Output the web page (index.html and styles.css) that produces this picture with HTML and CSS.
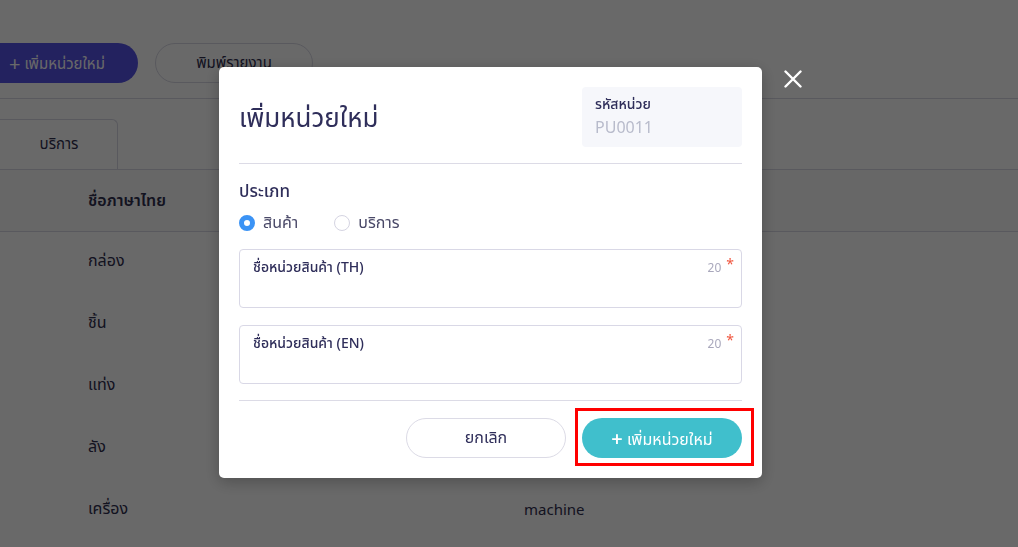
FILE: index.html
```html
<!DOCTYPE html>
<html lang="th">
<head>
<meta charset="utf-8">
<title>เพิ่มหน่วยใหม่</title>
<link rel="stylesheet" href="styles.css">
</head>
<body>
<div class="page">
  <div class="toolbar">
    <button class="btn-primary-bg"><span class="plus">+</span> เพิ่มหน่วยใหม่</button>
    <button class="btn-outline-bg">พิมพ์รายงาน</button>
  </div>
  <div class="tabs">
    <div class="tab">บริการ</div>
  </div>
  <div class="table">
    <div class="thead"><div class="c1">ชื่อภาษาไทย</div><div class="c2"></div></div>
    <div class="row"><div class="c1">กล่อง</div><div class="c2"></div></div>
    <div class="row"><div class="c1">ชิ้น</div><div class="c2"></div></div>
    <div class="row"><div class="c1">แท่ง</div><div class="c2"></div></div>
    <div class="row"><div class="c1">ลัง</div><div class="c2"></div></div>
    <div class="row"><div class="c1">เครื่อง</div><div class="c2">machine</div></div>
  </div>
</div>

<div class="overlay">
  <div class="modal">
    <div class="modal-head">
      <h1 class="title">เพิ่มหน่วยใหม่</h1>
      <div class="code-box">
        <div class="code-label">รหัสหน่วย</div>
        <div class="code-value">PU0011</div>
      </div>
    </div>
    <div class="divider"></div>
    <div class="section-label">ประเภท</div>
    <div class="radios">
      <label class="radio"><span class="dot checked"></span>สินค้า</label>
      <label class="radio"><span class="dot"></span>บริการ</label>
    </div>
    <div class="field">
      <div class="field-label">ชื่อหน่วยสินค้า (TH)</div>
      <div class="field-meta"><span class="count">20</span><span class="req">*</span></div>
    </div>
    <div class="field">
      <div class="field-label">ชื่อหน่วยสินค้า (EN)</div>
      <div class="field-meta"><span class="count">20</span><span class="req">*</span></div>
    </div>
    <div class="divider bottom"></div>
    <div class="actions">
      <button class="btn-cancel">ยกเลิก</button>
      <button class="btn-add"><span class="plus">+</span> เพิ่มหน่วยใหม่</button>
    </div>
    <div class="highlight"></div>
  </div>
  <div class="close">
    <svg width="18" height="18" viewBox="0 0 18 18"><path d="M1.5 1.5 L16.5 16.5 M16.5 1.5 L1.5 16.5" stroke="#fff" stroke-width="2.4" stroke-linecap="round" fill="none"/></svg>
  </div>
</div>
</body>
</html>
```

FILE: styles.css
```css
* { box-sizing: border-box; }
html, body { margin: 0; padding: 0; }
body {
  width: 1018px;
  height: 547px;
  overflow: hidden;
  background: #ffffff;
  font-family: "Noto Sans", "Noto Sans Thai", "Noto Sans Thai UI", sans-serif;
  color: #2f2e4f;
}
button { font-family: inherit; cursor: pointer; }

.page { width: 1018px; }
.toolbar {
  display: flex;
  gap: 17px;
  padding-top: 43px;
  margin-left: -30px;
  height: 99px;
  border-bottom: 1px solid #d8d8e4;
}
.btn-primary-bg {
  width: 168px; height: 40px;
  border: none; border-radius: 20px;
  background: #5553e6;
  color: #fff;
  font-size: 15px;
  padding-left: 12px;
}
.btn-primary-bg .plus { font-size: 20px; vertical-align: -2px; }
.btn-outline-bg {
  width: 158px; height: 40px;
  border: 1px solid #d8d8e4; border-radius: 20px;
  background: #fff;
  color: #2f2e4f;
  font-size: 15px;
}
.tabs {
  height: 71px;
  display: flex;
  align-items: flex-end;
  border-bottom: 1px solid #d8d8e4;
}
.tab {
  width: 130px; height: 50px;
  margin-left: -12px;
  border: 1px solid #d8d8e4; border-bottom: none;
  border-radius: 0 6px 0 0;
  background: #fff;
  display: flex; align-items: center; justify-content: center;
  font-size: 15px; color: #2f2e4f;
  padding-left: 12px;
}
.table { background: #fff; }
.thead, .row { display: flex; height: 62px; align-items: center; }
.row { padding-bottom: 5px; }
.thead { background: #fafafa; border-bottom: 1px solid #d8d8e4; height: 62px; font-weight: 600; }
.c1 { width: 524px; padding-left: 88px; font-size: 16px; }
.c2 { font-size: 15px; }

.overlay {
  position: fixed; inset: 0;
  background: rgba(0, 0, 0, 0.59);
}
.modal {
  position: absolute;
  left: 219px; top: 67px;
  width: 543px; height: 411px;
  background: #fff;
  border-radius: 5px;
  padding: 20px 20px 0 20px;
  box-shadow: 0 4px 16px rgba(0,0,0,0.25);
}
.modal-head {
  display: flex; justify-content: space-between; align-items: flex-start;
  height: 76px;
}
.title {
  margin: 14px 0 0 0;
  font-size: 26px;
  font-weight: 400;
  color: #2f2e5a;
  line-height: 32px;
}
.code-box {
  width: 160px; height: 60px;
  background: #f6f7fb;
  border-radius: 4px;
  padding: 6px 13px;
}
.code-label { font-size: 14px; color: #2f2e5a; font-weight: 500; line-height: 22px; }
.code-value { font-size: 16px; color: #b8bbcb; line-height: 24px; }
.divider { height: 1px; background: #dcdbe6; }
.section-label {
  margin-top: 14px;
  font-size: 17px; font-weight: 500; color: #2f2e5a;
  line-height: 26px;
}
.radios { display: flex; gap: 36px; margin-top: 5px; height: 28px; align-items: center; }
.radio { display: flex; align-items: center; gap: 8px; font-size: 16px; color: #4a4968; }
.dot {
  width: 16px; height: 16px; border-radius: 50%;
  border: 1px solid #d5d4e2; background: #fff;
}
.dot.checked { border: 5px solid #3b93f5; }
.field {
  margin-top: 12px;
  height: 59px;
  border: 1px solid #d9d8e6;
  border-radius: 4px;
  display: flex; justify-content: space-between;
  padding: 7px 8px 0 13px;
}
.field + .field { margin-top: 17px; }
.field-label { font-size: 14px; color: #2f2e5a; line-height: 20px; font-weight: 500; }
.field-meta { display: flex; gap: 5px; margin-right: -1px; }
.count { font-size: 12px; color: #a9a8bc; line-height: 22px; }
.req { color: #f0563f; font-size: 14px; line-height: 14px; }
.divider.bottom { margin-top: 16px; }
.actions {
  display: flex; justify-content: flex-end; gap: 16px;
  margin-top: 17px;
}
.btn-cancel {
  width: 160px; height: 40px;
  border: 1px solid #dcdbe6; border-radius: 20px;
  background: #fff;
  color: #2f2e5a; font-size: 16px;
}
.btn-add {
  width: 160px; height: 40px;
  border: none; border-radius: 20px;
  background: #40bfcc;
  color: #fff; font-size: 16px;
}
.btn-add .plus { font-size: 20px; font-weight: 600; vertical-align: -1px; }
.highlight {
  position: absolute;
  left: 356px; top: 341px;
  width: 179px; height: 58px;
  border: 3px solid #ff0000;
}
.close {
  position: absolute;
  left: 784px; top: 70px;
  width: 18px; height: 18px;
}
.close svg { display: block; }
```
